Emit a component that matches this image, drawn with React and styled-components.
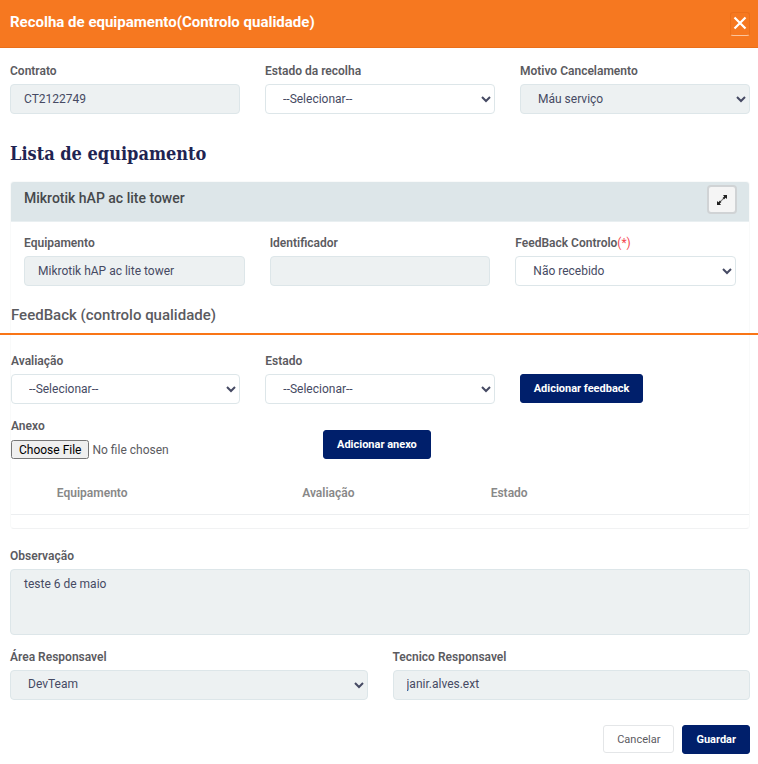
import React from 'react';
import styled, { createGlobalStyle } from 'styled-components';

const GlobalStyle = createGlobalStyle`
  *, *::before, *::after { box-sizing: border-box; }
  body {
    margin: 0;
    background: #fff;
    color: #5b5b5f;
    font-family: Roboto, "Liberation Sans", sans-serif;
    font-size: 12px;
    line-height: 18px;
  }
  button, input, select, textarea { font-family: inherit; font-size: 12px; }
`;

const Header = styled.header`
  display: flex;
  align-items: flex-start;
  justify-content: space-between;
  height: 48px;
  padding: 12px 8px 0 10px;
  background: #f67820;
  border-bottom: 1px solid #e96f1b;
`;

const HeaderTitle = styled.h1`
  margin: 0;
  color: #fff;
  font-size: 15px;
  font-weight: 700;
  line-height: 20px;
`;

const CloseButton = styled.button`
  display: flex;
  align-items: center;
  justify-content: center;
  width: 20px;
  height: 24px;
  padding: 0 0 2px;
  color: #fff;
  background: transparent;
  border: 1px solid #ec6f19;
  border-bottom-color: #fbc49c;
  border-radius: 3px;
`;

const Form = styled.form`
  padding: 14px 8px 10px 10px;
`;

const FieldGrid = styled.div`
  display: grid;
  grid-template-columns: repeat(${(p) => p.$columns}, minmax(0, 1fr));
  gap: 25px;
  align-items: end;
`;

const FieldBox = styled.div`
  display: flex;
  flex-direction: column;
  gap: 4px;
  min-width: 0;
`;

const Label = styled.label`
  font-weight: 600;
  line-height: 18px;
`;

const Required = styled.span`
  color: #f4474f;
  font-weight: 400;
`;

const controlStyles = `
  width: 100%;
  margin: 0;
  color: #464a63;
  background: #fff;
  border: 1px solid #dde6e9;
  border-radius: 4px;
  opacity: 1;
  outline: none;
  &:disabled, &:read-only:not(select) { background: #edf1f2; }
`;

const TextInput = styled.input`
  ${controlStyles}
  height: 30px;
  padding: 0 13px 1px;
`;

const Select = styled.select`
  ${controlStyles}
  height: 30px;
  padding: 0 0 1px 13px;
`;

const TextArea = styled.textarea`
  ${controlStyles}
  display: block;
  height: 66px;
  padding: 5px 13px;
  line-height: 18px;
  resize: none;
`;

const SectionTitle = styled.h2`
  margin: 27px 0 14px;
  color: #1f2452;
  font-family: "Roboto Slab", "DejaVu Serif Condensed", "DejaVu Serif", serif;
  font-size: 18px;
  font-weight: 700;
  line-height: 26px;
`;

const Card = styled.section`
  margin-bottom: 18px;
  border: 1px solid #f9fafa;
  border-bottom-color: #f1f2f3;
  border-radius: 4px;
`;

const CardHeader = styled.div`
  display: flex;
  justify-content: space-between;
  height: 40px;
  padding: 3px 12px 0 13px;
  background: #dde6e9;
  border-bottom: 1px solid #e9eff1;
  border-radius: 3px 3px 0 0;
`;

const CardTitle = styled.h3`
  margin: 0;
  padding-top: 3px;
  color: #46494c;
  font-size: 14px;
  font-weight: 500;
  line-height: 20px;
`;

const ExpandButton = styled.button`
  display: flex;
  align-items: center;
  justify-content: center;
  width: 30px;
  height: 29px;
  padding: 0;
  color: #222;
  background: #f5f5f5;
  border: 2px solid #d0d3d5;
  border-radius: 4px;
`;

const CardBody = styled.div`
  padding: 12px 13px 0;
`;

const FeedbackTitle = styled.h3`
  margin: 16px -9px 17px -11px;
  padding: 0 11px 5px;
  border-bottom: 2px solid #f97516;
  color: #5b5b5f;
  font-size: 15px;
  font-weight: 500;
  line-height: 26px;
`;

const Button = styled.button`
  height: ${(p) => (p.$primary ? 29 : 28)}px;
  padding: 0 13px;
  color: ${(p) => (p.$primary ? '#fff' : '#5b5b5f')};
  background: ${(p) => (p.$primary ? '#001f6b' : '#fff')};
  border: 1px solid ${(p) => (p.$primary ? '#001f6b' : '#e4e6e8')};
  border-radius: 3px;
  font-size: 11px;
  font-weight: ${(p) => (p.$primary ? 700 : 400)};
  white-space: nowrap;
`;

const ButtonCell = styled.div`
  padding-bottom: 1px;
`;

const AttachmentRow = styled.div`
  display: flex;
  align-items: flex-end;
  gap: 25px;
  margin-top: 13px;
`;

const AttachmentField = styled(FieldBox)`
  flex: 0 1 287px;
  gap: 5px;
`;

const FileInput = styled.input`
  width: 100%;
  height: 19px;
  line-height: 15px;
  &::file-selector-button {
    height: 19px;
    margin-right: 3px;
    padding: 0 6px;
    font: inherit;
  }
`;

const Table = styled.table`
  width: 100%;
  margin: 15px 0 13px;
  table-layout: fixed;
  border-collapse: collapse;
`;

const HeadCell = styled.th`
  width: ${(p) => p.$width};
  height: 40px;
  padding: 0 0 2px;
  color: #888;
  border-bottom: 1px solid #eceef0;
  font-weight: 600;
  text-align: center;
`;

const Stack = styled.div`
  display: flex;
  flex-direction: column;
  gap: 13px;
`;

const Actions = styled.footer`
  display: flex;
  align-items: center;
  justify-content: flex-end;
  gap: 8px;
  margin-top: 25px;
`;

function Field({ id, label, required, children }) {
  return (
    <FieldBox>
      <Label htmlFor={id}>
        {label}
        {required && <Required>(*)</Required>}
      </Label>
      {children}
    </FieldBox>
  );
}

function SelectField({ id, label, value, required, disabled }) {
  return (
    <Field id={id} label={label} required={required}>
      <Select id={id} defaultValue={value} disabled={disabled} required={required}>
        <option>{value}</option>
      </Select>
    </Field>
  );
}

function InputField({ id, label, value }) {
  return (
    <Field id={id} label={label}>
      <TextInput id={id} type="text" defaultValue={value} readOnly />
    </Field>
  );
}

function CloseIcon() {
  return (
    <svg width="14" height="14" viewBox="0 0 14 14" fill="none" stroke="currentColor" strokeWidth="2.2" aria-hidden="true">
      <path d="M1.5 1.5l11 11M12.5 1.5l-11 11" />
    </svg>
  );
}

function ExpandIcon() {
  return (
    <svg width="10" height="10" viewBox="0 0 10 10" fill="currentColor" aria-hidden="true">
      <path d="M6 0h4v4L8.6 2.8 7 4.4 5.6 3 7.2 1.4zM0 6l1.4 1.2L3 5.6 4.4 7 2.8 8.6 4 10H0z" />
      <path d="M3.6 5.7L5.7 3.6l.7.7-2.1 2.1z" opacity="0.6" />
    </svg>
  );
}

export default function App() {
  return (
    <>
      <GlobalStyle />
      <Header>
        <HeaderTitle>Recolha de equipamento(Controlo qualidade)</HeaderTitle>
        <CloseButton type="button" aria-label="Fechar">
          <CloseIcon />
        </CloseButton>
      </Header>
      <Form onSubmit={(e) => e.preventDefault()}>
        <FieldGrid $columns={3}>
          <InputField id="contrato" label="Contrato" value="CT2122749" />
          <SelectField id="estado-recolha" label="Estado da recolha" value="--Selecionar--" />
          <SelectField id="motivo" label="Motivo Cancelamento" value="Máu serviço" disabled />
        </FieldGrid>

        <SectionTitle>Lista de equipamento</SectionTitle>

        <Card>
          <CardHeader>
            <CardTitle>Mikrotik hAP ac lite tower</CardTitle>
            <ExpandButton type="button" aria-label="Expandir">
              <ExpandIcon />
            </ExpandButton>
          </CardHeader>
          <CardBody>
            <FieldGrid $columns={3}>
              <InputField id="equipamento" label="Equipamento" value="Mikrotik hAP ac lite tower" />
              <InputField id="identificador" label="Identificador" value="" />
              <SelectField id="feedback" label="FeedBack Controlo" value="Não recebido" required />
            </FieldGrid>
          </CardBody>

          <FeedbackTitle>FeedBack (controlo qualidade)</FeedbackTitle>

          <FieldGrid $columns={3}>
            <SelectField id="avaliacao" label="Avaliação" value="--Selecionar--" />
            <SelectField id="estado" label="Estado" value="--Selecionar--" />
            <ButtonCell>
              <Button type="button" $primary>Adicionar feedback</Button>
            </ButtonCell>
          </FieldGrid>

          <AttachmentRow>
            <AttachmentField>
              <Label htmlFor="anexo">Anexo</Label>
              <FileInput id="anexo" type="file" />
            </AttachmentField>
            <Button type="button" $primary>Adicionar anexo</Button>
          </AttachmentRow>

          <Table>
            <thead>
              <tr>
                <HeadCell scope="col" $width="22%">Equipamento</HeadCell>
                <HeadCell scope="col" $width="42%">Avaliação</HeadCell>
                <HeadCell scope="col" $width="7%">Estado</HeadCell>
                <HeadCell as="td" $width="29%" />
              </tr>
            </thead>
          </Table>
        </Card>

        <Stack>
          <Field id="observacao" label="Observação">
            <TextArea id="observacao" defaultValue="teste 6 de maio" readOnly />
          </Field>
          <FieldGrid $columns={2}>
            <SelectField id="area" label="Área Responsavel" value="DevTeam" disabled />
            <InputField id="tecnico" label="Tecnico Responsavel" value="janir.alves.ext" />
          </FieldGrid>
        </Stack>

        <Actions>
          <Button type="button">Cancelar</Button>
          <Button type="submit" $primary>Guardar</Button>
        </Actions>
      </Form>
    </>
  );
}
